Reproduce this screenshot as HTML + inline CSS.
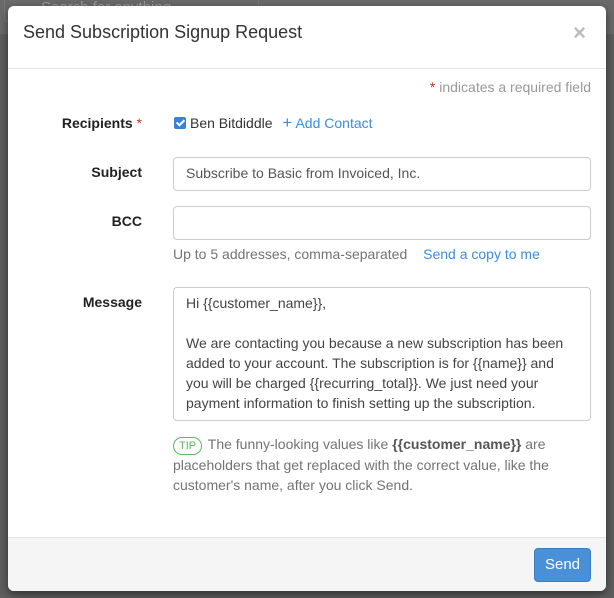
<!DOCTYPE html>
<html><head><meta charset="utf-8"><style>
*{box-sizing:border-box;margin:0;padding:0}
body{width:614px;height:598px;overflow:hidden;background:#5e5e5e;font-family:"Liberation Sans",Arial,sans-serif;font-size:14px;color:#333;position:relative}
.bgbar{position:absolute;left:0;top:0;width:614px;height:34px;background:#6a6a6a}
.bgsearch{position:absolute;left:4px;top:-10px;width:255px;height:32px;border:1px solid #777;border-radius:4px;color:#999;font-size:15px;padding:8px 0 0 36px}
.modal{position:absolute;left:8px;top:6px;width:598px;height:585px;background:#fff;border-radius:6px;box-shadow:0 3px 9px rgba(0,0,0,.5);overflow:hidden}
.abs{position:absolute}
.title{left:15px;top:16px;font-size:18px;color:#333}
.close{right:20px;top:14px;font-size:22px;color:#bbb;font-weight:bold}
.hr{left:0;top:62px;width:598px;height:1px;background:#e5e5e5}
.req{right:15px;top:73px;color:#999}
.req b{color:#c9302c;font-weight:normal}
.lbl{font-weight:bold;color:#222;text-align:right;width:134px;left:0}
.inp{left:165px;width:418px;border:1px solid #ccc;border-radius:4px;height:34px;padding:7px 12px;color:#555}
.help{color:#737373}
a{color:#3c8dde;text-decoration:none}
.cb{display:inline-block;width:12px;height:12px;background:#3b82d6;border-radius:2px;vertical-align:-1px;position:relative;margin-right:4px}
.cb:after{content:"";position:absolute;left:4px;top:1px;width:3px;height:6px;border:solid #fff;border-width:0 2px 2px 0;transform:rotate(45deg)}
.ta{left:165px;top:281px;width:418px;height:134px;border:1px solid #ccc;border-radius:4px;padding:5px 12px;line-height:20px;color:#444}
.tip{left:165px;top:428px;width:400px;line-height:20px;color:#737373}
.tag{display:inline-block;border:1px solid #5cb85c;color:#5cb85c;border-radius:10px;font-size:11px;padding:0 5px;line-height:16px;margin-right:2px}
.tip b{color:#555}
.footer{left:0;top:531px;width:598px;height:54px;background:#f5f5f5;border-top:1px solid #e5e5e5}
.btn{right:15px;top:10px;width:57px;height:34px;background:#4a90d9;color:#fff;border-radius:4px;text-align:center;line-height:32px;font-size:15px;border:1px solid #3b7dc4}
</style></head><body>
<div class="bgbar"></div><div class="bgsearch">Search for anything</div>
<div class="modal">
<div class="abs title">Send Subscription Signup Request</div>
<div class="abs close">×</div>
<div class="abs hr"></div>
<div class="abs req"><b>*</b> indicates a required field</div>
<div class="abs lbl" style="top:109px">Recipients <span style="color:#c9302c;font-weight:normal">*</span></div>
<div class="abs" style="left:166px;top:109px"><span class="cb"></span>Ben Bitdiddle <a style="margin-left:6px"><span style="font-size:17px;line-height:10px">+</span> Add Contact</a></div>
<div class="abs lbl" style="top:158px">Subject</div>
<div class="abs inp" style="top:151px">Subscribe to Basic from Invoiced, Inc.</div>
<div class="abs lbl" style="top:207px">BCC</div>
<div class="abs inp" style="top:200px"></div>
<div class="abs help" style="left:165px;top:240px">Up to 5 addresses, comma-separated <a style="margin-left:12px">Send a copy to me</a></div>
<div class="abs lbl" style="top:288px">Message</div>
<div class="abs ta">Hi {{customer_name}},<br><br>We are contacting you because a new subscription has been added to your account. The subscription is for {{name}} and you will be charged {{recurring_total}}. We just need your payment information to finish setting up the subscription.</div>
<div class="abs tip"><span class="tag">TIP</span> The funny-looking values like <b>{{customer_name}}</b> are placeholders that get replaced with the correct value, like the customer's name, after you click Send.</div>
<div class="abs footer"><div class="abs btn">Send</div></div>
</div>
</body></html>
